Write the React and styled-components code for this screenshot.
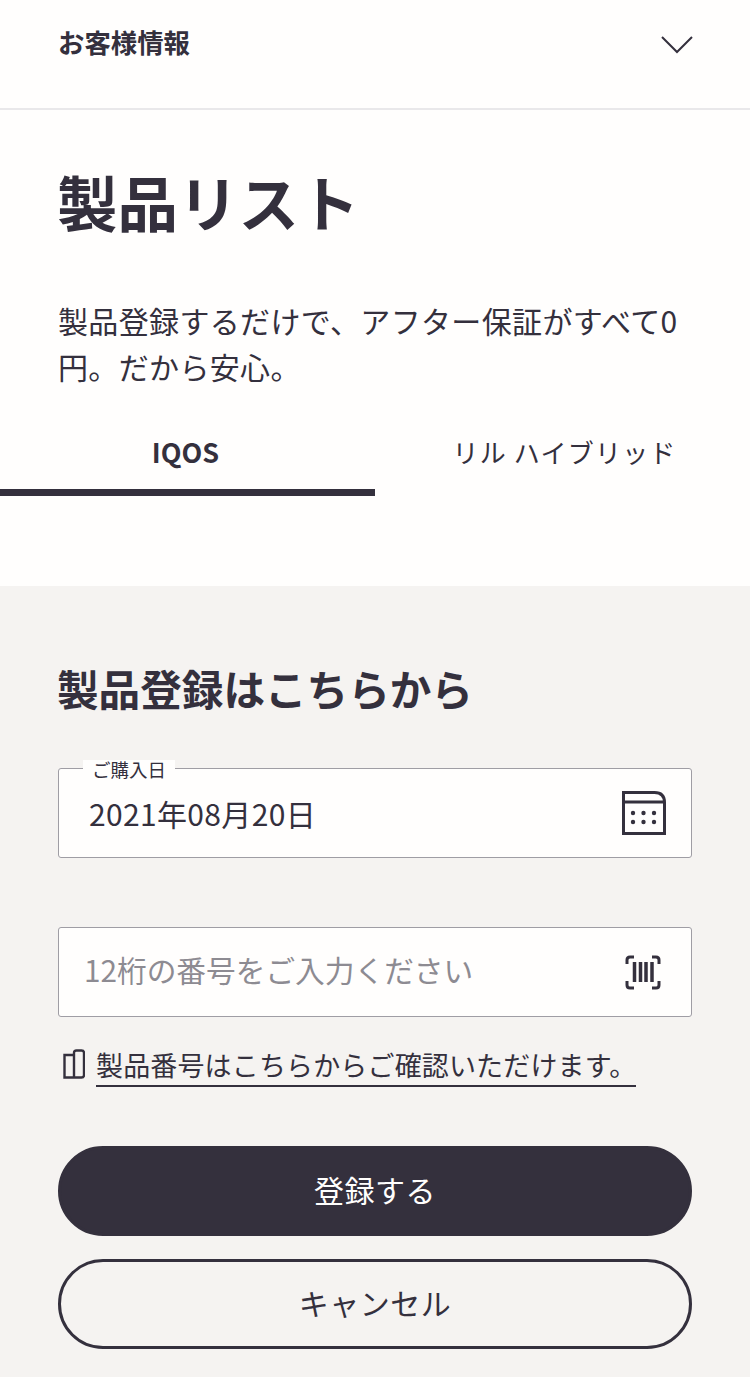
import React from "react";
import styled, { createGlobalStyle } from "styled-components";

const GlobalStyle = createGlobalStyle`
  html, body {
    margin: 0;
    padding: 0;
    background: #f5f3f1;
  }
  * {
    box-sizing: border-box;
  }
`;

const Page = styled.div`
  width: 750px;
  height: 1377px;
  overflow: hidden;
  color: #34303d;
  font-family: "Noto Sans CJK JP", "Noto Sans", sans-serif;
`;

const Top = styled.div`
  background: #fffefd;
  height: 586px;
`;

const Accordion = styled.div`
  height: 110px;
  padding: 0 57px 22px 58px;
  display: flex;
  align-items: center;
  justify-content: space-between;
  border-bottom: 2px solid #e9e8ea;
`;

const AccordionTitle = styled.div`
  font-size: 26.4px;
  line-height: 38px;
  margin-top: -2px;
  font-weight: 700;
`;

const Chevron = styled.svg`
  margin-top: 3px;
`;

const Heading = styled.h1`
  margin: 51px 58px 0 57px;
  font-size: 60.5px;
  line-height: 80px;
  font-weight: 700;
`;

const Lead = styled.p`
  margin: 56px 58px 0;
  font-size: 30px;
  line-height: 46px;
  letter-spacing: 0.35px;
`;

const Tabs = styled.div`
  display: flex;
  margin-top: 41px;
`;

const Tab = styled.div`
  width: 375px;
  height: 66px;
  padding-bottom: 16px;
  padding-right: ${(p) => (p.$active ? "4px" : "0")};
  padding-left: ${(p) => (p.$active ? "0" : "4px")};
  display: flex;
  align-items: center;
  justify-content: center;
  font-size: ${(p) => (p.$active ? "27px" : "26px")};
  letter-spacing: ${(p) => (p.$active ? "0" : "1.2px")};
  font-weight: ${(p) => (p.$active ? 700 : 400)};
  border-bottom: 7px solid ${(p) => (p.$active ? "#34303d" : "transparent")};
`;

const Form = styled.div`
  padding: 72px 58px 0;
`;

const FormTitle = styled.h2`
  margin: 0 0 0 -1px;
  font-size: 41.6px;
  line-height: 60px;
  font-weight: 700;
`;

const Field = styled.div`
  position: relative;
  height: 90px;
  margin-top: ${(p) => p.$top}px;
  padding: 0 25px 0 ${(p) => p.$left}px;
  display: flex;
  align-items: center;
  justify-content: space-between;
  background: #fffefd;
  border: 1.5px solid #9f9da4;
  border-radius: 3px;
`;

const FieldLabel = styled.span`
  position: absolute;
  top: -9px;
  left: 24px;
  padding: 0 9px;
  background: #fffefd;
  font-size: 18.5px;
  line-height: 19px;
`;

const FieldValue = styled.span`
  font-size: ${(p) => (p.$placeholder ? "29.7px" : "30px")};
  letter-spacing: ${(p) => (p.$placeholder ? "0" : "0.35px")};
  margin-bottom: ${(p) => (p.$placeholder ? "5px" : "0")};
  color: ${(p) => (p.$placeholder ? "#8d8b92" : "#34303d")};
`;

const Barcode = styled.svg`
  margin-right: 5px;
`;

const Help = styled.div`
  display: flex;
  align-items: flex-start;
  gap: 11px;
  margin-top: 30px;
  margin-left: 5px;
`;

const HelpIcon = styled.svg`
  margin-top: 2px;
`;

const HelpLink = styled.span`
  font-size: 27px;
  line-height: 38px;
  letter-spacing: 0.15px;
  margin-top: -1px;
  padding-bottom: 1px;
  border-bottom: 2px solid #34303d;
  white-space: nowrap;
`;

const Button = styled.button`
  display: block;
  width: 100%;
  height: 90px;
  margin-top: ${(p) => p.$top}px;
  padding: 0 0 5px;
  border: 3px solid #34303d;
  border-radius: 45px;
  font-family: inherit;
  font-size: 30px;
  letter-spacing: 0.5px;
  color: ${(p) => (p.$primary ? "#fffefd" : "#34303d")};
  background: ${(p) => (p.$primary ? "#34303d" : "transparent")};
`;

const CalendarIcon = () => (
  <svg width="44" height="44" viewBox="0 0 44 44" fill="none" stroke="#34303d" strokeWidth="3">
    <path d="M1.5 1.5h31q10 0 10 10v31H1.5zM1.5 11h41" />
    <g fill="#34303d" stroke="none">
      <circle cx="11" cy="22" r="2.2" />
      <circle cx="21.5" cy="22" r="2.2" />
      <circle cx="32" cy="22" r="2.2" />
      <circle cx="11" cy="31" r="2.2" />
      <circle cx="21.5" cy="31" r="2.2" />
      <circle cx="32" cy="31" r="2.2" />
    </g>
  </svg>
);

const BarcodeIcon = () => (
  <Barcode width="36" height="35" viewBox="0 0 36 35" fill="none" stroke="#34303d" strokeWidth="3">
    <path d="M9 2H5Q2 2 2 5v4M27 2h4q3 0 3 3v4M9 33H5q-3 0-3-3v-4M27 33h4q3 0 3-3v-4" />
    <path d="M9.500 7v20M15.500 7v20M21 7v20M27 7v20" strokeWidth="3.5" />
  </Barcode>
);

const PhoneIcon = () => (
  <HelpIcon width="22" height="30" viewBox="0 0 22 30" fill="none" stroke="#34303d" strokeWidth="2.4">
    <path d="M1.500 6h9.500v22.500H1.500zM11 28.500V4q0-2.500 2.500-2.500h5Q21 1.500 21 4v22q0 2.500-2.500 2.500z" />
  </HelpIcon>
);

export default function App() {
  return (
    <Page>
      <GlobalStyle />
      <Top>
        <Accordion>
          <AccordionTitle>お客様情報</AccordionTitle>
          <Chevron width="32" height="20" viewBox="0 0 32 20" fill="none" stroke="#34303d" strokeWidth="2">
            <path d="M1 2l15 15L31 2" />
          </Chevron>
        </Accordion>
        <Heading>製品リスト</Heading>
        <Lead>製品登録するだけで、アフター保証がすべて0円。だから安心。</Lead>
        <Tabs>
          <Tab $active>IQOS</Tab>
          <Tab>リル ハイブリッド</Tab>
        </Tabs>
      </Top>
      <Form>
        <FormTitle>製品登録はこちらから</FormTitle>
        <Field $top={50} $left={30}>
          <FieldLabel>ご購入日</FieldLabel>
          <FieldValue>2021年08月20日</FieldValue>
          <CalendarIcon />
        </Field>
        <Field $top={69} $left={25}>
          <FieldValue $placeholder>12桁の番号をご入力ください</FieldValue>
          <BarcodeIcon />
        </Field>
        <Help>
          <PhoneIcon />
          <HelpLink>製品番号はこちらからご確認いただけます。</HelpLink>
        </Help>
        <Button $primary $top={59}>登録する</Button>
        <Button $top={23}>キャンセル</Button>
      </Form>
    </Page>
  );
}
